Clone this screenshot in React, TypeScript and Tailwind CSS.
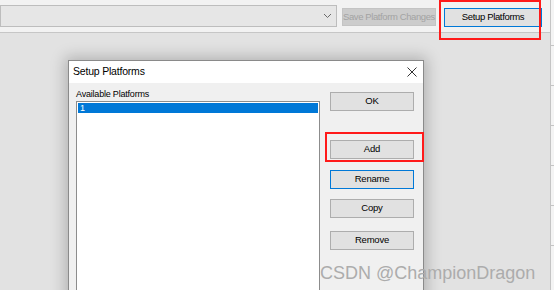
const btn =
  "flex h-[19px] w-[84px] items-center justify-center whitespace-nowrap border bg-[#e1e1e1] text-[9.5px] tracking-[-0.2px] text-black";

export default function App() {
  return (
    <div className="relative flex h-[290px] w-[554px] overflow-hidden bg-[#f2f2f2] font-['Liberation_Sans',Arial,sans-serif]">
      {/* main window */}
      <div className="flex w-[551px] flex-col border-r border-[#c4c4c4]">
        {/* toolbar */}
        <div className="flex h-[33px] items-start border-b border-[#c6c6c6] bg-[#f2f2f2] pt-[5px]">
          <div className="flex h-[22px] w-[337px] items-center justify-end border border-[#bdbdbd] bg-[#e6e6e6] pr-[3px]">
            <svg width="9" height="6" viewBox="0 0 9 6" className="mr-[1px]">
              <path d="M1 1 L4.5 4.5 L8 1" fill="none" stroke="#6a6a6a" strokeWidth="1" />
            </svg>
          </div>
          <div className="ml-[5px] mt-[3px] flex h-[18px] w-[94px] items-center justify-center whitespace-nowrap border border-[#c4c4c4] bg-[#cccccc] text-[9.5px] tracking-[-0.4px] text-[#a3a3a3]">
            Save Platform Changes
          </div>
          <div className="ml-[8px] mt-[3px] flex h-[19px] w-[98px] items-center justify-center whitespace-nowrap border border-[#0078d7] bg-[#e1e1e1] text-[9.5px] tracking-[-0.35px] text-black">
            Setup Platforms
          </div>
        </div>
        <div className="flex-1 bg-[#e2e2e2]" />
      </div>

      {/* ruler strip */}
      <div className="flex flex-1 flex-col gap-[39px] bg-[#f4f4f4] pt-[45px]">
        {[0, 1, 2, 3, 4, 5].map((i) => (
          <div key={i} className="h-px w-full bg-[#c4c4c4]" />
        ))}
      </div>

      {/* dialog window */}
      <div className="absolute left-[68px] top-[60px] flex h-[260px] w-[356px] flex-col border border-[#8a8a8a] bg-[#f0f0f0] shadow-[0_0_14px_3px_rgba(0,0,0,0.22)]">
        <div className="flex h-[22px] items-center justify-between bg-white pl-[4px] pr-[6px]">
          <span className="text-[10.5px] tracking-[-0.2px] text-black">Setup Platforms</span>
          <svg width="10" height="10" viewBox="0 0 10 10">
            <path d="M0.5 0.5 L9.5 9.5 M9.5 0.5 L0.5 9.5" stroke="#333" strokeWidth="1" />
          </svg>
        </div>
        <div className="flex pl-[7px]">
          <div className="flex w-[244px] flex-col pt-[5px]">
            <div className="h-[13px] whitespace-nowrap text-[9px] leading-[12px] tracking-[-0.2px] text-black">
              Available Platforms
            </div>
            <div className="h-[200px] border border-[#8c8c8c] bg-white p-px">
              <div className="h-[10px] bg-[#0078d7] pl-[2px] text-[9px] leading-[10px] text-white">1</div>
            </div>
          </div>
          <div className="ml-[10px] flex flex-col pt-[9px]">
            <div className={`${btn} border-[#adadad]`}>OK</div>
            <div className={`${btn} mt-[29px] border-[#adadad]`}>Add</div>
            <div className={`${btn} mt-[11px] border-[#0078d7]`}>Rename</div>
            <div className={`${btn} mt-[10px] border-[#adadad]`}>Copy</div>
            <div className={`${btn} mt-[13px] border-[#adadad]`}>Remove</div>
          </div>
        </div>
      </div>

      {/* annotations */}
      <div className="absolute left-[439px] top-0 h-[40px] w-[102px] border-2 border-[#ff1a1a]" />
      <div className="absolute left-[325px] top-[132px] h-[30px] w-[99px] border-2 border-[#ff1a1a]" />

      {/* watermark */}
      <div className="absolute left-[320px] top-[264px] whitespace-nowrap text-[18px] leading-[18px] text-[#acacac]">
        CSDN @ChampionDragon
      </div>
    </div>
  );
}
